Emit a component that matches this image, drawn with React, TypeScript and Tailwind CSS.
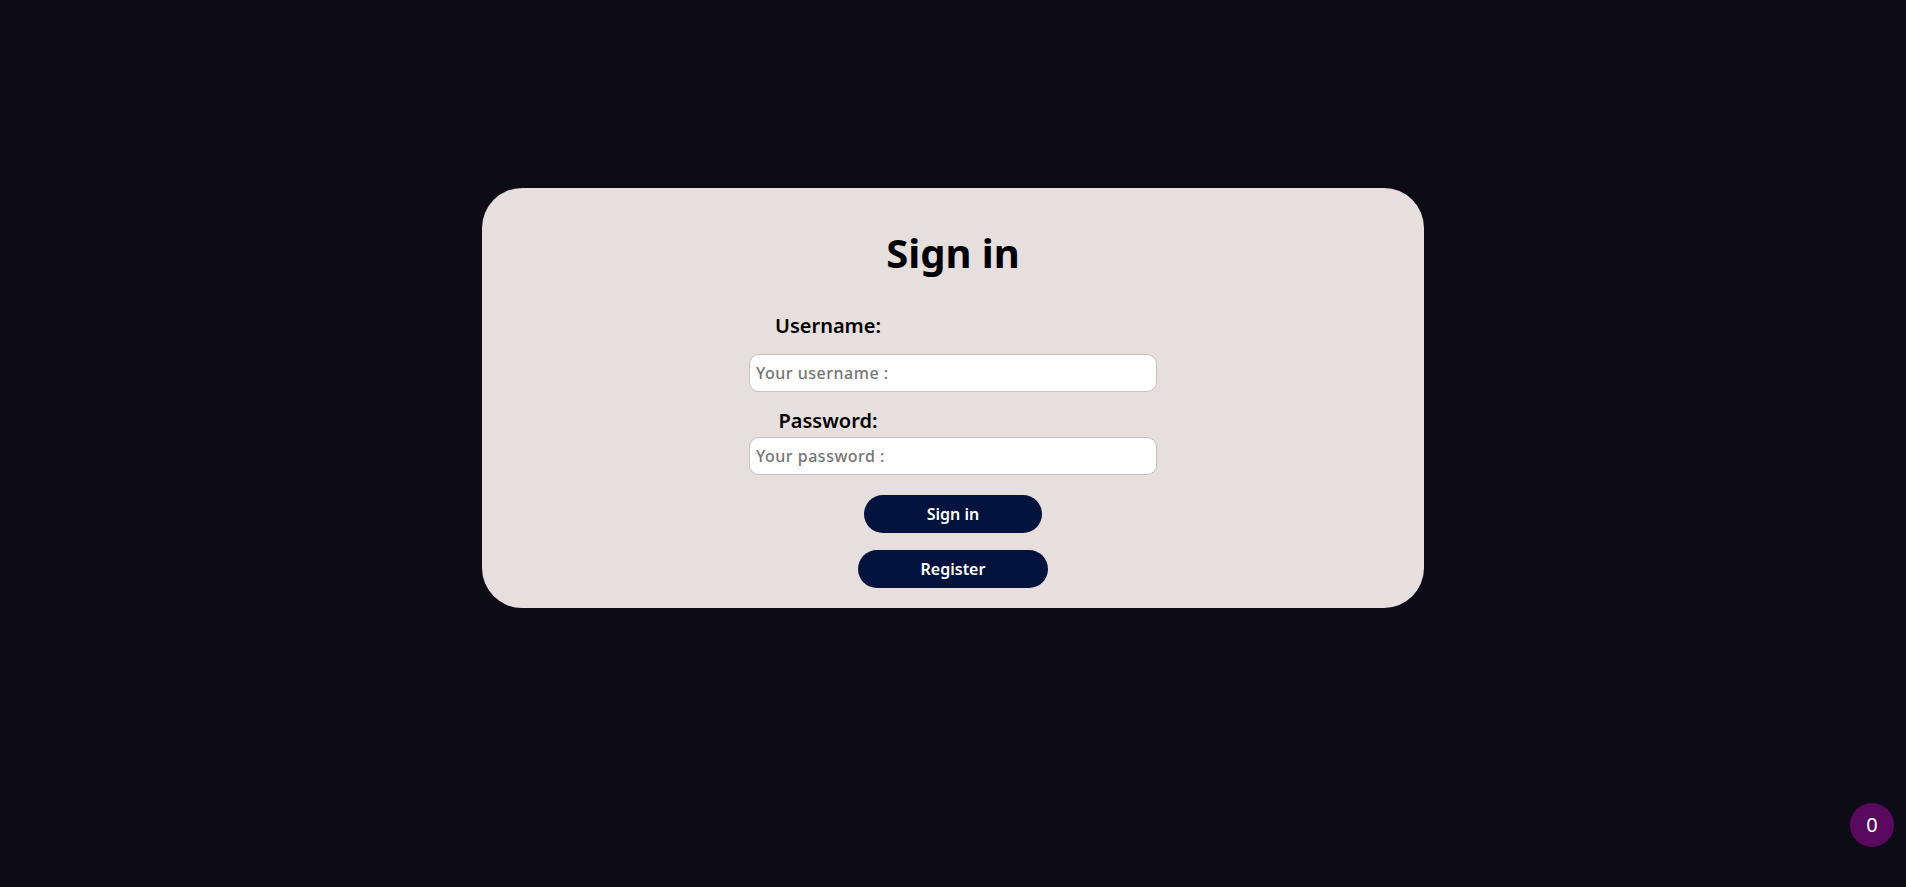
import React from "react";

export default function App() {
  return (
    <div className="min-h-screen w-full bg-[#0d0b16] flex flex-col items-center pt-[188px] font-['Noto_Sans','Liberation_Sans',sans-serif]">
      <div className="w-[942px] rounded-[40px] bg-[#e6dfde] flex flex-col items-center pt-[41px] pb-[20px]">
        <h1 className="text-[40px] leading-[48px] font-bold text-black">Sign in</h1>
        <div className="w-[408px] flex flex-col mt-[37px]">
          <label className="w-[158px] text-center text-[20px] leading-[24px] font-semibold text-black">Username:</label>
          <input
            className="mt-[16px] h-[38px] w-full rounded-[10px] border border-[#c4c4c4] bg-white px-[6px] text-[16px] font-medium tracking-[0.5px] text-black placeholder:text-[#757575] outline-none font-['Noto_Sans','Liberation_Sans',sans-serif]"
            placeholder="Your username :"
          />
          <label className="mt-[17px] w-[158px] text-center text-[20px] leading-[24px] font-semibold text-black">Password:</label>
          <input
            type="password"
            className="mt-[4px] h-[38px] w-full rounded-[10px] border border-[#c4c4c4] bg-white px-[6px] text-[16px] font-medium tracking-[0.5px] text-black placeholder:text-[#757575] outline-none font-['Noto_Sans','Liberation_Sans',sans-serif]"
            placeholder="Your password :"
          />
        </div>
        <button className="mt-[20px] h-[38px] px-[63px] rounded-full bg-[#02143d] text-white text-[16px] font-semibold font-['Noto_Sans','Liberation_Sans',sans-serif]">
          Sign in
        </button>
        <button className="mt-[17px] h-[38px] px-[63px] rounded-full bg-[#02143d] text-white text-[16px] font-semibold font-['Noto_Sans','Liberation_Sans',sans-serif]">
          Register
        </button>
      </div>
      <div className="fixed right-[12px] bottom-[40px] w-[44px] h-[44px] rounded-full bg-[#5a0a5e] flex items-center justify-center text-white text-[20px]">
        0
      </div>
    </div>
  );
}
